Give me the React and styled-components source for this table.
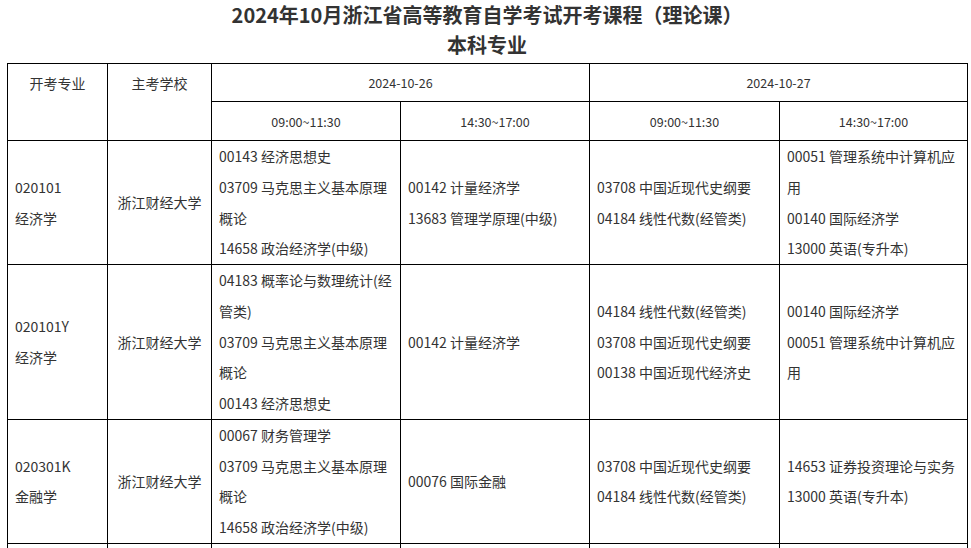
import React from "react";
import styled, { createGlobalStyle } from "styled-components";

const GlobalStyle = createGlobalStyle`
  html, body {
    margin: 0;
    padding: 0;
    background: #fff;
  }
  body {
    font-family: "Noto Sans CJK SC", "Noto Sans", sans-serif;
    color: #333;
  }
`;

const rows = [
  {
    code: "020101",
    major: "经济学",
    school: "浙江财经大学",
    slots: [
      ["00143 经济思想史", "03709 马克思主义基本原理概论", "14658 政治经济学(中级)"],
      ["00142 计量经济学", "13683 管理学原理(中级)"],
      ["03708 中国近现代史纲要", "04184 线性代数(经管类)"],
      ["00051 管理系统中计算机应用", "00140 国际经济学", "13000 英语(专升本)"],
    ],
  },
  {
    code: "020101Y",
    major: "经济学",
    school: "浙江财经大学",
    slots: [
      ["04183 概率论与数理统计(经管类)", "03709 马克思主义基本原理概论", "00143 经济思想史"],
      ["00142 计量经济学"],
      ["04184 线性代数(经管类)", "03708 中国近现代史纲要", "00138 中国近现代经济史"],
      ["00140 国际经济学", "00051 管理系统中计算机应用"],
    ],
  },
  {
    code: "020301K",
    major: "金融学",
    school: "浙江财经大学",
    slots: [
      ["00067 财务管理学", "03709 马克思主义基本原理概论", "14658 政治经济学(中级)"],
      ["00076 国际金融"],
      ["03708 中国近现代史纲要", "04184 线性代数(经管类)"],
      ["14653 证券投资理论与实务", "13000 英语(专升本)"],
    ],
  },
];

const colWidths = [100, 104, 189, 189, 190, 188];

export default function App() {
  return (
    <Page>
      <GlobalStyle />
      <Heading>
        <Title>2024年10月浙江省高等教育自学考试开考课程（理论课）</Title>
        <Title>本科专业</Title>
      </Heading>
      <Table>
        <colgroup>
          {colWidths.map((w, i) => (
            <col key={i} style={{ width: w }} />
          ))}
        </colgroup>
        <thead>
          <tr>
            <MainHead rowSpan={2}>开考专业</MainHead>
            <MainHead rowSpan={2}>主考学校</MainHead>
            <DateHead colSpan={2}>2024-10-26</DateHead>
            <DateHead colSpan={2}>2024-10-27</DateHead>
          </tr>
          <tr>
            <TimeHead>09:00~11:30</TimeHead>
            <TimeHead>14:30~17:00</TimeHead>
            <TimeHead>09:00~11:30</TimeHead>
            <TimeHead>14:30~17:00</TimeHead>
          </tr>
        </thead>
        <tbody>
          {rows.map((r) => (
            <tr key={r.code}>
              <Cell>
                <Line>{r.code}</Line>
                <Line>{r.major}</Line>
              </Cell>
              <Cell $center>{r.school}</Cell>
              {r.slots.map((courses, i) => (
                <Cell key={i}>
                  {courses.map((c) => (
                    <Line key={c}>{c}</Line>
                  ))}
                </Cell>
              ))}
            </tr>
          ))}
          <EmptyRow>
            {colWidths.map((_, i) => (
              <Cell key={i} />
            ))}
          </EmptyRow>
        </tbody>
      </Table>
    </Page>
  );
}

const Page = styled.div`
  padding: 0 4px 0 7px;
  width: 960px;
`;

const Heading = styled.div`
  text-align: center;
  padding-bottom: 3px;
`;

const Title = styled.h1`
  margin: 0;
  font-size: 20px;
  line-height: 30px;
  font-weight: 700;
  color: #333;
`;

const Table = styled.table`
  border-collapse: collapse;
  table-layout: fixed;
  width: 960px;
  font-size: 14px;
`;

const MainHead = styled.th`
  border: 1px solid #000;
  font-weight: normal;
  font-size: 14px;
  line-height: 38px;
  vertical-align: top;
  text-align: center;
  padding: 0 7px;
`;

const DateHead = styled.th`
  border: 1px solid #000;
  font-weight: normal;
  font-size: 12.5px;
  height: 37px;
  text-align: center;
  padding: 0;
`;

const TimeHead = styled(DateHead)`
  height: 38px;
`;

const Cell = styled.td`
  border: 1px solid #000;
  padding: 0 7px 0 7px;
  line-height: 30.75px;
  vertical-align: middle;
  text-align: ${(p) => (p.$center ? "center" : "left")};
  word-break: normal;
`;

const Line = styled.div``;

const EmptyRow = styled.tr`
  height: 124px;
`;
